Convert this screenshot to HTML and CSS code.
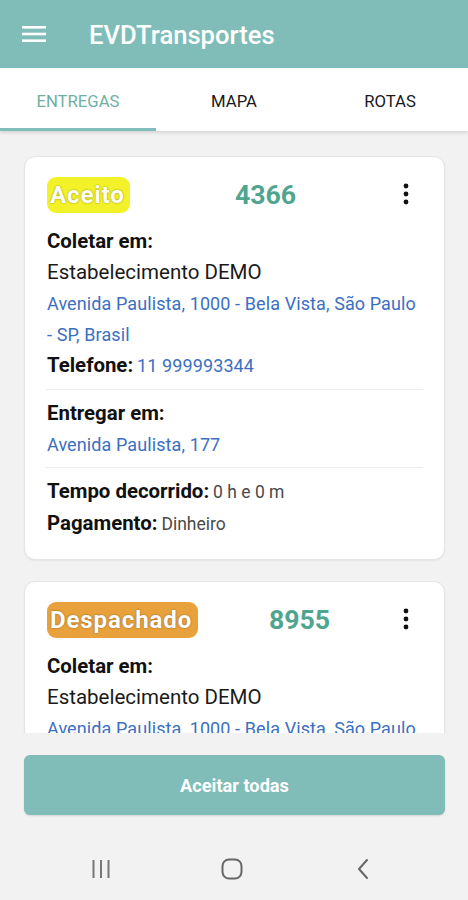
FILE: index.html
```html
<!DOCTYPE html>
<html lang="pt-BR">
<head>
<meta charset="utf-8">
<title>EVDTransportes</title>
<link rel="stylesheet" href="styles.css">
</head>
<body>
<div class="screen">
  <header class="appbar">
    <svg class="menu-icon" width="24" height="18" viewBox="0 0 24 18"><rect x="0" y="1" width="24" height="2.6" fill="#fff"/><rect x="0" y="7.7" width="24" height="2.6" fill="#fff"/><rect x="0" y="14.4" width="24" height="2.6" fill="#fff"/></svg>
    <h1 class="title">EVDTransportes</h1>
  </header>
  <nav class="tabs">
    <div class="tab active">ENTREGAS</div>
    <div class="tab">MAPA</div>
    <div class="tab">ROTAS</div>
  </nav>
  <main class="list">
    <section class="card">
      <div class="card-head">
        <span class="badge badge-yellow">Aceito</span>
        <span class="order">4366</span>
        <svg class="kebab" width="6" height="22" viewBox="0 0 6 22"><circle cx="3" cy="3" r="2.4" fill="#111"/><circle cx="3" cy="11" r="2.4" fill="#111"/><circle cx="3" cy="19" r="2.4" fill="#111"/></svg>
      </div>
      <div class="block">
        <div class="label">Coletar em:</div>
        <div class="text">Estabelecimento DEMO</div>
        <div class="link">Avenida Paulista, 1000 - Bela Vista, São Paulo - SP, Brasil</div>
        <div class="row"><span class="label">Telefone:</span> <span class="link">11 999993344</span></div>
      </div>
      <hr class="divider">
      <div class="block">
        <div class="label">Entregar em:</div>
        <div class="link">Avenida Paulista, 177</div>
      </div>
      <hr class="divider">
      <div class="block">
        <div class="row"><span class="label">Tempo decorrido:</span> <span class="value">0 h e 0 m</span></div>
        <div class="row"><span class="label">Pagamento:</span> <span class="value">Dinheiro</span></div>
      </div>
    </section>
    <section class="card card-partial">
      <div class="card-head">
        <span class="badge badge-orange">Despachado</span>
        <span class="order">8955</span>
        <svg class="kebab" width="6" height="22" viewBox="0 0 6 22"><circle cx="3" cy="3" r="2.4" fill="#111"/><circle cx="3" cy="11" r="2.4" fill="#111"/><circle cx="3" cy="19" r="2.4" fill="#111"/></svg>
      </div>
      <div class="block">
        <div class="label">Coletar em:</div>
        <div class="text">Estabelecimento DEMO</div>
        <div class="link">Avenida Paulista, 1000 - Bela Vista, São Paulo - SP, Brasil</div>
      </div>
    </section>
  </main>
  <div class="actions">
    <button class="accept-all">Aceitar todas</button>
  </div>
  <footer class="navbar">
    <span class="nav-btn"><svg width="20" height="20" viewBox="0 0 20 20"><rect x="1.5" y="1" width="2" height="18" fill="#777"/><rect x="9" y="1" width="2" height="18" fill="#777"/><rect x="16.5" y="1" width="2" height="18" fill="#777"/></svg></span>
    <span class="nav-btn"><svg width="22" height="22" viewBox="0 0 22 22"><rect x="1.5" y="1.5" width="19" height="19" rx="6.5" fill="none" stroke="#666" stroke-width="2"/></svg></span>
    <span class="nav-btn"><svg width="14" height="22" viewBox="0 0 14 22"><path d="M11 2 L3 11 L11 20" fill="none" stroke="#666" stroke-width="2" stroke-linecap="round" stroke-linejoin="round"/></svg></span>
  </footer>
</div>
</body>
</html>
```
FILE: styles.css
```css
* { box-sizing: border-box; }
html, body { margin: 0; padding: 0; }
body {
  font-family: Roboto, "Noto Sans", "Liberation Sans", sans-serif;
  background: #f2f2f2;
  color: #111;
}
.screen {
  width: 468px;
  height: 900px;
  display: flex;
  flex-direction: column;
  overflow: hidden;
}
.appbar {
  height: 68px;
  flex: none;
  background: #80bcb8;
  display: flex;
  align-items: center;
  padding-left: 22px;
}
.menu-icon { flex: none; }
.title {
  margin: 2px 0 0 43px;
  color: #fff;
  font-size: 25.6px;
  font-weight: 500;
}
.tabs {
  height: 63px;
  flex: none;
  background: #fff;
  display: flex;
  box-shadow: 0 2px 3px rgba(0,0,0,0.12);
  position: relative;
  z-index: 1;
}
.tab {
  flex: 1;
  display: flex;
  align-items: center;
  justify-content: center;
  font-size: 16.7px;
  color: #1a1a1a;
  border-bottom: 3px solid transparent;
  padding-top: 6px;
}
.tab.active {
  color: #6fafa3;
  border-bottom-color: #80bcb8;
}
.list {
  flex: none;
  height: 602px;
  overflow: hidden;
  padding: 25px 23px 0 24px;
  display: flex;
  flex-direction: column;
  gap: 21px;
}
.card {
  flex: none;
  background: #fff;
  border-radius: 11px;
  border: 1px solid #e4e4e4;
  box-shadow: 0 1px 2px rgba(0,0,0,0.06);
  padding: 20px 24px 19px 22px;
}
.card-partial { padding-bottom: 60px; }
.card-head {
  display: flex;
  align-items: center;
  height: 36px;
  margin-bottom: 13px;
}
.badge {
  flex: none;
  color: #fff;
  font-weight: 700;
  font-size: 24px;
  letter-spacing: 0.9px;
  height: 36px;
  line-height: 36px;
  padding: 0 3px;
  border-radius: 9px;
  white-space: nowrap;
  text-shadow: 0 0 2px rgba(0,0,0,0.45);
}
.badge-yellow { background: #f3f228; width: 83px; }
.badge-orange { background: #e9a23b; width: 151px; }
.order {
  flex: 1;
  text-align: center;
  color: #4fa58f;
  font-weight: 700;
  font-size: 26.7px;
  margin-right: 2px;
}
.kebab { flex: none; margin-right: 11px; margin-top: -2px; }
.block { line-height: 31px; }
.label { font-weight: 700; font-size: 20.4px; color: #111; }
.text { font-size: 20.5px; color: #1a1a1a; }
.link { font-size: 18px; color: #3b6fc2; letter-spacing: 0.1px; }
.value { font-size: 17.5px; color: #4a4a4a; }
.divider {
  border: 0;
  border-top: 1px solid #ececec;
  margin: 7px -3px 8px -1px;
}
.actions {
  flex: none;
  padding: 22px 23px 0 24px;
}
.accept-all {
  width: 100%;
  height: 60px;
  border: 0;
  border-radius: 6px;
  background: #80bcb8;
  color: #fff;
  font-family: Roboto, "Noto Sans", sans-serif;
  font-weight: 700;
  font-size: 18.2px;
  box-shadow: 0 1px 2px rgba(0,0,0,0.12);
}
.navbar {
  flex: 1;
  display: grid;
  grid-template-columns: 40px 40px 40px;
  column-gap: 91px;
  align-items: center;
  padding: 22px 0 0 81px;
}
.nav-btn {
  display: flex;
  justify-content: center;
  align-items: center;
}
```
